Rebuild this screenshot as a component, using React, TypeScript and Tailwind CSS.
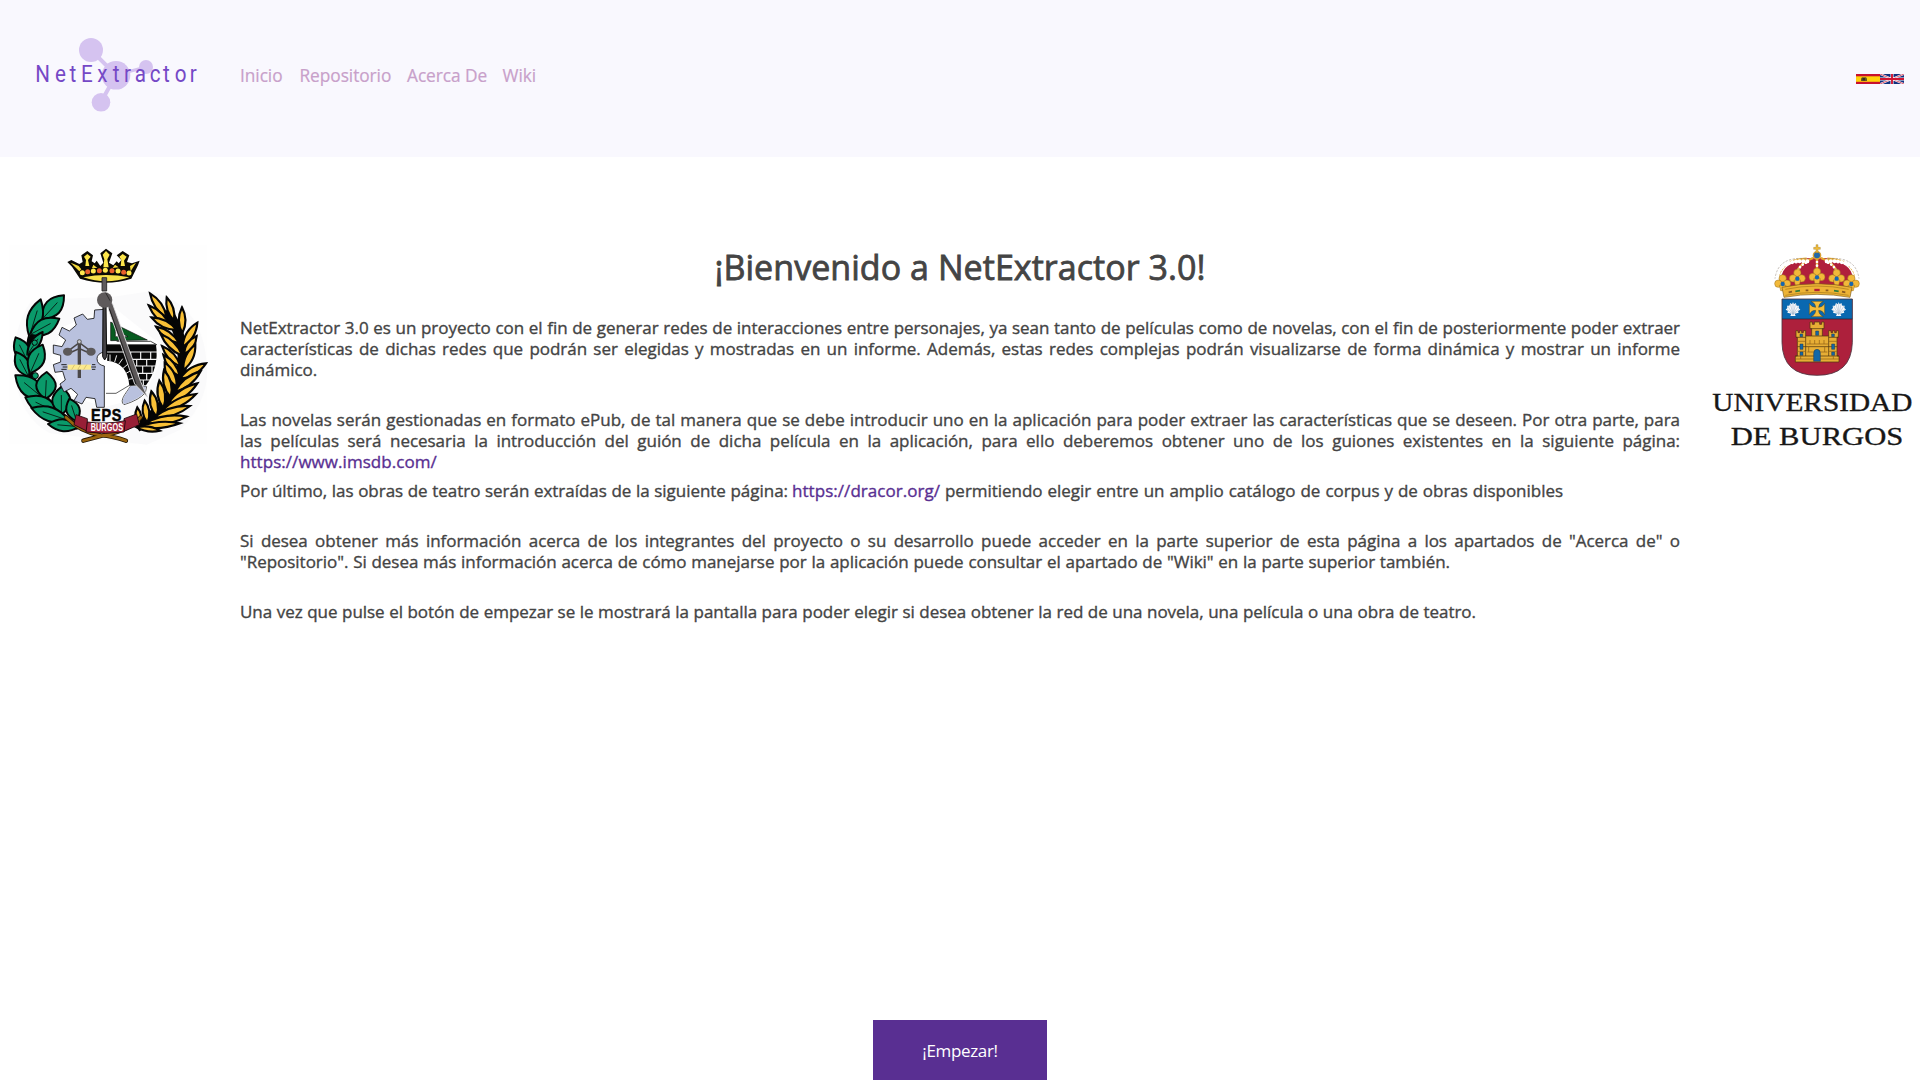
import React from "react";

type Leaf = [number, number, number, number, number];

// Pointed leaf running from its base (x1,y1) to its tip (x2,y2) with the given width.
function leafPath([x1, y1, x2, y2, w]: Leaf) {
  const dx = x2 - x1;
  const dy = y2 - y1;
  const len = Math.hypot(dx, dy);
  const nx = (-dy / len) * w * 0.7;
  const ny = (dx / len) * w * 0.7;
  const ax = x1 + dx * 0.35;
  const ay = y1 + dy * 0.35;
  const bx = x1 + dx * 0.65;
  const by = y1 + dy * 0.65;
  return `M${x1} ${y1}C${ax + nx} ${ay + ny} ${bx + nx} ${by + ny} ${x2} ${y2}C${bx - nx} ${by - ny} ${ax - nx} ${ay - ny} ${x1} ${y1}Z`;
}

const laurel: Leaf[] = [
  [126, 268, 192, 196, 46],
  [88, 320, 122, 208, 42],
  [90, 314, 178, 266, 44],
  [84, 396, 47, 322, 42],
  [82, 374, 128, 306, 26],
  [86, 440, 48, 366, 38],
  [90, 430, 128, 344, 46],
  [134, 508, 46, 436, 52],
  [136, 508, 140, 426, 56],
  [178, 550, 76, 502, 48],
  [184, 554, 184, 470, 52],
  [208, 572, 94, 534, 40],
  [230, 574, 208, 506, 38],
  [238, 590, 144, 582, 34],
];

const wheat: Leaf[] = [
  [500, 262, 450, 190, 20],
  [522, 272, 500, 202, 18],
  [512, 292, 446, 226, 20],
  [530, 300, 454, 262, 20],
  [547, 310, 546, 232, 20],
  [548, 350, 592, 278, 22],
  [538, 340, 468, 290, 20],
  [552, 372, 590, 318, 20],
  [548, 378, 482, 312, 20],
  [550, 420, 586, 344, 22],
  [542, 410, 486, 348, 20],
  [540, 446, 618, 400, 22],
  [540, 440, 490, 374, 20],
  [524, 486, 602, 424, 22],
  [530, 470, 494, 398, 22],
  [505, 520, 592, 460, 22],
  [512, 502, 492, 420, 22],
  [488, 542, 588, 492, 22],
  [490, 535, 478, 452, 22],
  [462, 562, 570, 528, 22],
  [470, 560, 454, 484, 22],
  [440, 578, 560, 560, 22],
  [442, 578, 434, 512, 20],
  [420, 590, 540, 580, 18],
  [410, 592, 480, 602, 14],
  [418, 588, 412, 532, 18],
];

const crownJewels = [
  [247, 128, "#ffe94f"],
  [263, 125, "#e8602c"],
  [280, 123, "#ffe94f"],
  [298, 122, "#e8602c"],
  [316, 121, "#ffe94f"],
  [336, 122, "#e8602c"],
  [354, 123, "#ffe94f"],
  [371, 127, "#e8602c"],
  [387, 129, "#ffe94f"],
] as const;

function EpsEmblem() {
  return (
    <svg className="block h-[230px] w-[220px]" viewBox="0 0 660 690" aria-label="EPS Burgos">
      <path d="M26 46H622V642H26Z" fill="#fefefe" />
      <path d="M96 210Q30 300 45 440Q60 560 150 610L440 644L540 600Q640 500 618 380Q600 220 450 184L340 200Z" fill="#fafafb" />
      <path d="M313 238L190 290L150 385L190 490L313 532L430 500L480 400L470 334L340 230Z" fill="#fff" />

      {/* crown */}
      <path d="M202 96L214 90L238 102L248 96L244 76L262 63L279 76L275 94L284 100L290 92L301 108L310 98L301 70L318 56L337 70L327 98L340 106L350 94L356 100L364 90L350 76L368 63L388 76L381 96L396 100L419 92L414 106L394 146Q318 170 240 146L216 110Z" fill="#0b0a05" />
      <path d="M252 80L262 72L272 80L264 90L268 108L256 108L258 90Z M308 74L318 63L329 74L322 88L326 112L310 112L313 88Z M358 80L368 72L380 80L372 92L375 108L362 108L364 90Z" fill="#fde64b" />
      <path d="M212 98L236 108L244 118L238 124Z M408 98L390 108L392 124Z M280 104L292 114H276Z M345 104L356 112L338 114Z" fill="#f4d93c" />
      {crownJewels.map(([x, y, c]) => (
        <ellipse key={x} cx={x} cy={y} rx="7.5" ry="7.5" fill={c} />
      ))}
      <path d="M250 142Q318 128 388 142Q318 166 250 142Z" fill="#f7e14a" />

      {/* laurel branch */}
      <path d="M128 262Q84 300 86 380Q82 450 132 500Q180 560 236 592" fill="none" stroke="#050505" strokeWidth="18" />
      {laurel.map((l, i) => (
        <g key={i}>
          <path d={leafPath(l)} fill="#0a9a6a" stroke="#050505" strokeWidth="6" strokeLinejoin="round" />
          <path d={`M${l[0]} ${l[1]}L${l[0] + (l[2] - l[0]) * 0.7} ${l[1] + (l[3] - l[1]) * 0.7}`} stroke="#06251a" strokeWidth="3" />
        </g>
      ))}
      <circle cx="104" cy="338" r="8" fill="#0a9a6a" stroke="#050505" strokeWidth="3" />
      <circle cx="106" cy="437" r="9" fill="#0a9a6a" stroke="#050505" strokeWidth="3" />

      {/* wheat */}
      <path d="M500 240Q560 330 545 420Q520 520 410 592" fill="none" stroke="#050505" strokeWidth="30" />
      {wheat.map((l, i) => (
        <path key={i} d={leafPath(l)} fill="#f9c036" stroke="#050505" strokeWidth="6.5" strokeLinejoin="miter" />
      ))}

      {/* bricks */}
      <path d="M318 344H468Q478 410 438 466H404Q404 384 318 372Z" fill="#080808" />
      <path d="M318 366H472M382 388H474M395 408H470M402 430H462M408 450H450M392 366V386M422 366V386M452 366V386M410 388V408M440 388V408M428 408V430M456 408V430M415 430V450M440 430V450M430 450V466" stroke="#f4f4f4" strokeWidth="3.5" />
      <path d="M322 382Q392 388 398 466" fill="none" stroke="#080808" strokeWidth="20" />
      <path d="M330 374V394M350 376L344 396M368 386L356 403M384 402L368 416M396 420L378 430M404 444L386 448" stroke="#f4f4f4" strokeWidth="3" />
      <path d="M350 334H452L470 344H318" fill="#fff" stroke="#222" strokeWidth="2.5" />
      <path d="M332 276V332L442 330ZM346 300L384 320H346Z" fill="#075c20" fillRule="evenodd" stroke="#111" strokeWidth="2" />

      {/* gear */}
      <path d="M313 238L284 240L282 265L262 268L248 252L222 264L229 285L208 303L186 292L177 315L197 330L186 350L160 345V370L182 376V396L160 404L165 427L188 424L196 450L180 462L192 486L213 475L233 493L222 512L246 522L258 502L285 506L290 532H313V408Q291 404 291 386Q291 370 313 366Z" fill="#b9c1de" stroke="#111" strokeWidth="2.5" />
      <path d="M318 490H348L388 466L440 470L436 488Q418 510 372 524Q360 516 374 494L392 468" fill="none" stroke="#111" strokeWidth="2" />
      <path d="M392 468L438 470L432 490Q414 508 374 522Q362 514 376 494Z" fill="#b9c1de" />

      {/* centrifugal governor */}
      <g stroke="#4a4748" fill="none">
        <path d="M238 336V444" strokeWidth="10" />
        <path d="M238 338L206 362M238 338L270 362M215 366L238 356L261 366" strokeWidth="4.5" />
      </g>
      <circle cx="238" cy="335" r="6" fill="#c7c7cc" stroke="#555" strokeWidth="3" />
      <ellipse cx="203" cy="365" rx="14" ry="12" fill="#5c595a" />
      <ellipse cx="273" cy="365" rx="14" ry="12" fill="#5c595a" />
      <path d="M203 404H273V419H203Z" fill="#fbe98e" />
      <path d="M215 419L224 404M233 419L242 404M251 419L260 404" stroke="#d9c470" strokeWidth="3" />
      <path d="M184 404H200M188 411H202M184 418H200M276 404H286M274 411H288M276 418H286" stroke="#222" strokeWidth="3" />

      {/* compass */}
      <path d="M306 143H320V183H306Z" fill="#5e5a5b" stroke="#222" strokeWidth="2.5" />
      <path d="M309 228H318L320 380L314 390L308 380Z" fill="#444245" stroke="#0a0a0a" strokeWidth="3" />
      <path d="M316 200L338 222L422 455L443 502L404 462L326 240Z" fill="#5c5859" stroke="#e6e6e8" strokeWidth="2.5" />
      <path d="M328 236L408 462" stroke="#111" strokeWidth="2.5" />
      <circle cx="314" cy="210" r="23" fill="#5e5a5b" />
      <path d="M317 188L330 212" stroke="#222" strokeWidth="2.5" />

      {/* ribbon */}
      <path d="M198 562Q240 606 302 616Q340 618 378 632M422 562Q390 600 318 614L250 632" fill="none" stroke="#221504" strokeWidth="13" strokeLinecap="round" />
      <path d="M198 562Q240 606 302 616Q340 618 378 632M422 562Q390 600 318 614L250 632" fill="none" stroke="#9b650f" strokeWidth="8" strokeLinecap="round" />
      <path d="M228 554L262 566V604L222 584ZM410 552L372 566V604L418 584Z" fill="#971f36" stroke="#180509" strokeWidth="2.5" />
      <path d="M262 576Q318 584 376 572L372 606Q318 614 258 606Z" fill="#a3243c" stroke="#180509" strokeWidth="2.5" />
      <text transform="translate(273 572) scale(.92 1)" fontSize="47" fontWeight="700" letterSpacing="2.5" fill="#050505" stroke="#050505" strokeWidth="1.5" fontFamily="Liberation Sans, sans-serif">
        EPS
      </text>
      <text transform="translate(272 604) scale(.66 1)" fontSize="33" fontWeight="700" letterSpacing="0.5" fill="#fff" fontFamily="Liberation Sans, sans-serif">
        BURGOS
      </text>
    </svg>
  );
}

const shellRays = "M0 16L-18 2M0 16L-16 -9M0 16L-8 -16M0 16V-19M0 16L8 -16M0 16L16 -9M0 16L18 2";

function UbuEmblem() {
  return (
    <svg className="block h-[230px] w-[220px]" viewBox="0 0 660 690" aria-label="Universidad de Burgos">
      {/* crown */}
      <path d="M250 180Q230 130 268 104Q310 80 351 84Q392 80 434 104Q472 130 452 180Z" fill="#b01f3c" />
      <g fill="none" stroke="#e3a72e" strokeWidth="7">
        <path d="M351 80V140M340 84Q300 96 290 130M362 84Q402 96 412 130M320 86Q250 88 234 140M382 86Q452 88 468 140" />
      </g>
      <g fill="none" stroke="#fff" strokeWidth="12" strokeLinecap="round" strokeDasharray="0.1 11">
        <path d="M322 94Q236 88 232 146" />
        <path d="M380 94Q466 88 470 146" />
        <path d="M351 96V124" strokeWidth="8" />
        <path d="M318 98Q300 106 292 124M384 98Q402 106 410 124" strokeWidth="8" />
      </g>
      <g fill="none" stroke="#8d8175" strokeWidth="1.5" strokeDasharray="7 4">
        <path d="M318 86Q234 78 225 146M384 86Q468 78 477 146" />
      </g>
      <circle cx="351" cy="76" r="11" fill="#2369a8" stroke="#d9a133" strokeWidth="4" />
      <path d="M348 44H354V52H361V58H354V68H348V58H341V52H348Z" fill="#f0bd3c" stroke="#8d6a1d" strokeWidth="1" />
      {[
        [248, 158],
        [292, 142],
        [351, 138],
        [410, 142],
        [454, 158],
      ].map(([x, y]) => (
        <g key={x} fill="#f2b93a" stroke="#9b701a" strokeWidth="1.5">
          <circle cx={x} cy={y - 13} r="11" />
          <circle cx={x - 13} cy={y + 3} r="11" />
          <circle cx={x + 13} cy={y + 3} r="11" />
          <path d={`M${x - 10} ${y + 8}H${x + 10}L${x + 6} ${y + 24}H${x - 6}Z`} />
          <circle cx={x} cy={y + 4} r="6.5" fill="#1767ad" stroke="none" />
        </g>
      ))}
      <path d="M246 172Q351 150 456 172L450 202Q351 184 252 202Z" fill="#edb336" stroke="#7e5a17" strokeWidth="2" />
      <path d="M256 178Q351 158 446 178M256 196Q351 178 446 196" fill="none" stroke="#a67818" strokeWidth="2" />
      <path d="M286 184L300 182M402 182L416 184" stroke="#327c3a" strokeWidth="5" />
      <path d="M266 187L276 185M317 181H325M377 181H385M426 185L436 187" stroke="#8a5a20" strokeWidth="5" />
      <path d="M343 180H359" stroke="#b41f35" strokeWidth="7" />

      {/* shield */}
      <path d="M246 207H457V338Q454 436 351 436Q248 436 246 338Z" fill="#ad203c" />
      <path d="M246 207H457V267H246Z" fill="#0968b0" />
      <path d="M246 207H457V338Q454 436 351 436Q248 436 246 338Z" fill="none" stroke="#4b3440" strokeWidth="2.5" />
      <path d="M246 267H457" stroke="#222" strokeWidth="2" />
      <path d="M333 214H370Q356 220 356 232Q368 232 374 220V254Q368 241 356 241Q356 254 370 260H333Q347 254 347 241Q334 241 328 254V220Q334 232 347 232Q347 220 333 214Z" fill="#f3bd3b" stroke="#4c4425" strokeWidth="1.5" />
      {[279, 416].map((x) => (
        <g key={x} transform={`translate(${x} 237)`}>
          <path d="M-8 21L-5 14L-17 11L-15 6L-22 2L-17 -3L-18 -10L-11 -10L-8 -18L-3 -14L0 -20L3 -14L8 -18L11 -10L18 -10L17 -3L22 2L15 6L17 11L5 14L8 21Z" fill="#f8fafc" />
          <path d={shellRays} stroke="#9eb4cb" strokeWidth="1.6" />
        </g>
      ))}

      {/* castle */}
      <g fill="#e7ae35" stroke="#51370f" strokeWidth="2.2">
        <path d="M286 396V378H292V322H288V302H294V308H299V302H305V308H310V302H317V318H335V296H330V276H337V283H343V276H359V283H365V276H372V296H367V318H386V302H393V308H398V302H404V308H409V302H415V322H411V378H417V396Z" />
        <path d="M288 322H317M386 322H415M331 296H371M292 350H411M286 378H417M317 318V378M386 318V378M335 318H367" fill="none" />
        <path d="M292 334H317M292 364H317M386 334H411M386 364H411M320 342H384M322 366H382M286 387H417M330 330V342M344 330V342M358 330V342M372 330V342M326 350V366M374 350V366M302 378V387M400 378V387" fill="none" stroke="#936416" />
      </g>
      <g fill="#1168a9" stroke="#26384b" strokeWidth="1.5">
        <path d="M341 394V370Q341 358 351 358Q361 358 361 370V394Z" />
        <path d="M300 342H309V358H300ZM395 342H404V358H395ZM347 303H356V316H347ZM300 312H308V320H300ZM395 312H403V320H395ZM300 366H309V376H300ZM395 366H404V376H395Z" />
      </g>

      <g fill="#171717" fontFamily="Liberation Serif, serif" stroke="#171717">
        <text x="37" y="544" fontSize="77" textLength="600" lengthAdjust="spacingAndGlyphs" strokeWidth="1">
          UNIVERSIDAD
        </text>
        <text x="92" y="644" fontSize="77" textLength="518" lengthAdjust="spacingAndGlyphs" strokeWidth="1">
          DE BURGOS
        </text>
      </g>
    </svg>
  );
}

// Glyph name and left edge of each letter in the wordmark.
const wordmark: [string, number][] = [
  ["N", 35.3],
  ["e", 55],
  ["t", 69.5],
  ["E", 81],
  ["x", 97.3],
  ["t", 112.7],
  ["r", 124],
  ["a", 134.7],
  ["c", 149.8],
  ["t", 162.9],
  ["o", 174.8],
  ["r", 189.8],
];

function Logo() {
  return (
    <svg className="block h-[157px] w-[240px] shrink-0" viewBox="0 0 240 157" aria-label="NetExtractor">
      <g fill="#d5c3f0">
        <path d="M91 50L116 75L101 102" fill="none" stroke="#d5c3f0" strokeWidth="4" />
        <path d="M116 75L146 67" fill="none" stroke="#d5c3f0" strokeWidth="3" />
        <circle cx="91" cy="50" r="12" />
        <circle cx="116" cy="75.3" r="14.3" />
        <circle cx="146" cy="67" r="7" />
        <circle cx="101" cy="102.3" r="9.3" />
      </g>
      <g fill="#7548c6" fontFamily="Roboto, sans-serif" fontSize="24" fontWeight="400">
        {wordmark.map(([c, x]) => (
          <text key={x} transform={`translate(${x} 82.4) scale(.86 1)`}>
            {c}
          </text>
        ))}
      </g>
    </svg>
  );
}

function SpainFlag() {
  return (
    <svg className="block h-[10px] w-6" viewBox="0 0 24 10" aria-label="Español">
      <path d="M0 0H24V10H0Z" fill="#c8102e" />
      <path d="M0 2.3H24V7.8H0Z" fill="#ffd20a" />
      <path d="M5 4.5L6 3.3H10L11 4.5V7H5Z" fill="#6d5a1c" />
      <path d="M6.5 4H9V6.5H6.5Z" fill="#3c2c20" />
    </svg>
  );
}

function UkFlag() {
  return (
    <svg className="block h-[10px] w-6" viewBox="0 0 24 10" preserveAspectRatio="none" aria-label="English">
      <path d="M0 0H24V10H0Z" fill="#12307f" />
      <path d="M0 0L24 10M24 0L0 10" stroke="#fff" strokeWidth="2" />
      <path d="M0 0L24 10M24 0L0 10" stroke="#d32b45" strokeWidth="0.8" />
      <path d="M12 0V10M0 5H24" stroke="#fff" strokeWidth="3" />
      <path d="M12 0V10M0 5H24" stroke="#cf1533" strokeWidth="1.9" />
    </svg>
  );
}

const links = [
  { label: "Inicio", style: "w-[43px]" },
  { label: "Repositorio", style: "w-[91px]" },
  { label: "Acerca De", style: "w-[79px]" },
  { label: "Wiki", style: "w-[36px]" },
];

// One line of copy with its measured width; the words spread over it.
function Line({ w = "w-[1440px]", children }: { w?: string; children: React.ReactNode }) {
  return <span className={`block whitespace-nowrap text-justify [text-align-last:justify] ${w}`}>{children}</span>;
}

export default function App() {
  return (
    <div className="flex h-[1080px] w-full flex-col overflow-hidden bg-white font-['Open_Sans','Noto_Sans',sans-serif] text-[#444]">
      <header className="flex h-[157px] shrink-0 items-center bg-[#f9f8fe]">
        <Logo />
        <nav className="flex gap-[16.5px] pb-[6px] text-[17.3px] tracking-[-0.05px] text-[#c8a0ca] [-webkit-text-stroke:0.2px_#c8a0ca]">
          {links.map((l) => (
            <a key={l.label} href="#" className={`block whitespace-nowrap ${l.style}`}>
              {l.label}
            </a>
          ))}
        </nav>
        <div className="ml-auto mr-4 flex pt-px">
          <SpainFlag />
          <UkFlag />
        </div>
      </header>

      <main className="flex grow pt-[73px]">
        <aside className="w-[240px] shrink-0">
          <EpsEmblem />
        </aside>
        <section className="w-[1440px] shrink-0 pt-4">
          <h2 className="text-center text-[34px] leading-[42px] tracking-[0.05px] [-webkit-text-stroke:0.8px_#444]">¡Bienvenido a NetExtractor 3.0!</h2>
          <div className="mt-[29px] text-[17px] leading-[21px] tracking-[-0.03px] [-webkit-text-stroke:0.35px]">
            <p className="mb-[29px]">
              <Line>NetExtractor 3.0 es un proyecto con el fin de generar redes de interacciones entre personajes, ya sean tanto de películas como de novelas, con el fin de posteriormente poder extraer</Line>
              <Line>características de dichas redes que podrán ser elegidas y mostradas en un informe. Además, estas redes complejas podrán visualizarse de forma dinámica y mostrar un informe</Line>
              <Line w="w-[78px]">dinámico.</Line>
            </p>
            <p className="mb-2">
              <Line>Las novelas serán gestionadas en formato ePub, de tal manera que se debe introducir uno en la aplicación para poder extraer las características que se deseen. Por otra parte, para</Line>
              <Line>las películas será necesaria la introducción del guión de dicha película en la aplicación, para ello deberemos obtener uno de los guiones existentes en la siguiente página:</Line>
              <a href="#" className="tracking-[0.05px] text-[#592f92]">https://www.imsdb.com/</a>
            </p>
            <p className="mb-[29px]">
              <span className="flex">
                <Line w="w-[548px]">Por último, las obras de teatro serán extraídas de la siguiente página:</Line>
                <a href="#" className="ml-1 w-[148px] whitespace-nowrap tracking-[0.05px] text-[#592f92]">https://dracor.org/</a>
                <Line w="ml-[5px] w-[618px]">permitiendo elegir entre un amplio catálogo de corpus y de obras disponibles</Line>
              </span>
            </p>
            <p className="mb-[29px]">
              <Line>Si desea obtener más información acerca de los integrantes del proyecto o su desarrollo puede acceder en la parte superior de esta página a los apartados de "Acerca de" o</Line>
              <Line w="w-[1210px]">"Repositorio". Si desea más información acerca de cómo manejarse por la aplicación puede consultar el apartado de "Wiki" en la parte superior también.</Line>
            </p>
            <p>
              <Line w="w-[1236px]">Una vez que pulse el botón de empezar se le mostrará la pantalla para poder elegir si desea obtener la red de una novela, una película o una obra de teatro.</Line>
            </p>
          </div>
        </section>
        <aside className="flex grow justify-end">
          <UbuEmblem />
        </aside>
      </main>

      <div className="flex shrink-0 justify-center">
        <button className="h-[60px] w-[174px] bg-[#592f92] pt-px text-[17px] tracking-[-0.35px] text-white">¡Empezar!</button>
      </div>
    </div>
  );
}
